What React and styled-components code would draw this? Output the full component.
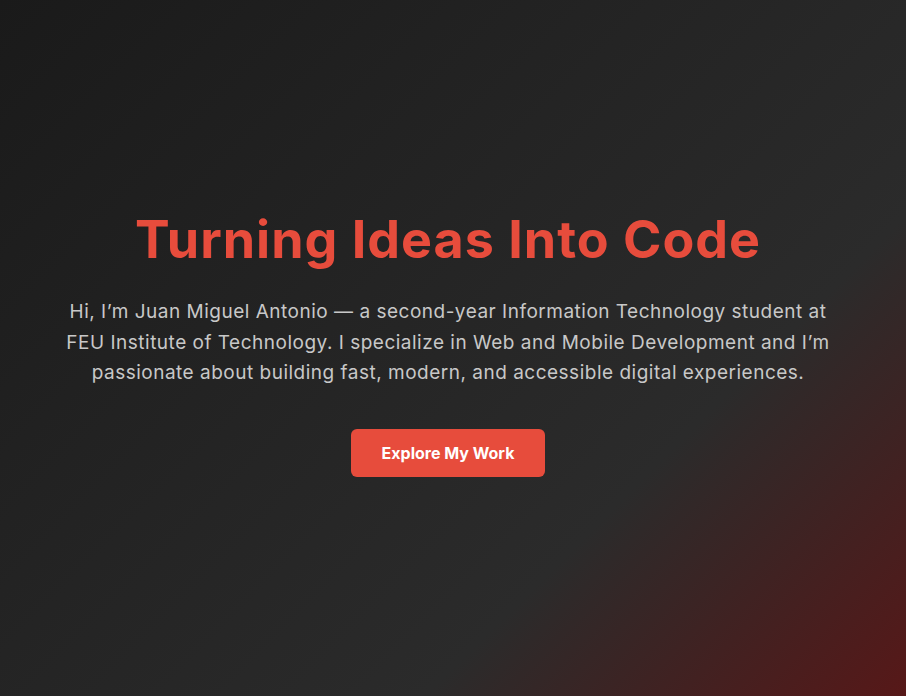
import styled, { createGlobalStyle } from "styled-components";

const GlobalStyle = createGlobalStyle`
* {
  box-sizing: border-box;
}
body {
  margin: 0;
  font-family: "Inter", "Liberation Sans", sans-serif;
  background: #1a1a1a;
}
`;

const Hero = styled.section`
min-height: 100vh;
display: flex;
flex-direction: column;
align-items: center;
justify-content: center;
text-align: center;
padding: 0 50px 10px 40px;
background: linear-gradient(135deg, #1a1a1a 0%, #2b2b2b 70%, #571818 100%);
`;

const Title = styled.h1`
margin: 0 0 26px;
font-size: 52px;
font-weight: 700;
line-height: 1.2;
color: #e74c3c;
letter-spacing: 1px;
`;

const Intro = styled.p`
margin: 0 0 40px;
max-width: 790px;
font-size: 19px;
line-height: 30.5px;
letter-spacing: 0.5px;
color: #c8c8c8;
`;

const PrimaryButton = styled.a`
display: inline-flex;
align-items: center;
justify-content: center;
width: 194px;
height: 48px;
border-radius: 6px;
background-color: #e74c3c;
color: #ffffff;
font-size: 16px;
font-weight: 700;
text-decoration: none;
cursor: pointer;
`;

export default function App() {
    return (
        <>
            <GlobalStyle />
            <Hero>
                <Title>Turning Ideas Into Code</Title>
                <Intro>
                    Hi, I’m Juan Miguel Antonio — a second-year Information Technology student at
                    FEU Institute of Technology. I specialize in Web and Mobile Development and I’m
                    passionate about building fast, modern, and accessible digital experiences.
                </Intro>
                <PrimaryButton href="#projects">Explore My Work</PrimaryButton>
            </Hero>
        </>
    );
}
